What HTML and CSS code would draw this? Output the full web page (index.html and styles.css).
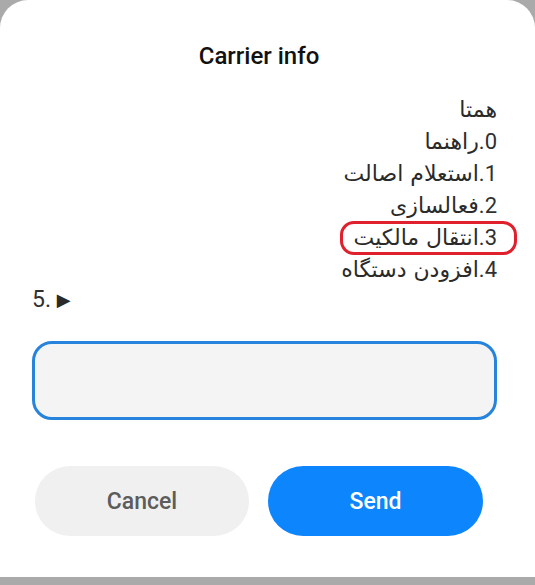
FILE: index.html
```html
<!DOCTYPE html>
<html lang="en">
<head>
<meta charset="utf-8">
<title>Carrier info</title>
<link rel="stylesheet" href="styles.css">
</head>
<body>
<div class="sheet">
  <h1 class="title">Carrier info</h1>
  <div class="menu" dir="rtl">
    <div class="line">همتا</div>
    <div class="line"><span class="num">0.</span>راهنما</div>
    <div class="line"><span class="num">1.</span>استعلام اصالت</div>
    <div class="line"><span class="num">2.</span>فعالسازی</div>
    <div class="line"><span class="mark"><span class="num">3.</span>انتقال مالکیت</span></div>
    <div class="line"><span class="num">4.</span>افزودن دستگاه</div>
  </div>
  <div class="prompt">5. <span class="arrow">&#x25B6;</span></div>
  <div class="input"></div>
  <div class="actions">
    <button class="btn cancel">Cancel</button>
    <button class="btn send">Send</button>
  </div>
</div>
</body>
</html>
```

FILE: styles.css
```css
html, body {
  margin: 0;
  padding: 0;
}
body {
  background: #aaaaaa;
  font-family: Roboto, "DejaVu Sans", sans-serif;
  width: 535px;
  height: 585px;
  overflow: hidden;
}
.sheet {
  background: #ffffff;
  height: 577px;
  border-radius: 28px 28px 0 0;
  box-sizing: border-box;
  padding-top: 41px;
}
.title {
  margin: 0;
  text-align: center;
  font-size: 24px;
  font-weight: 500;
  line-height: 30px;
  color: #111111;
  padding-right: 17px;
}
.menu {
  margin-top: 23px;
  padding-right: 38px;
  font-family: "DejaVu Sans", sans-serif;
  font-size: 22px;
  line-height: 32px;
  color: #2a2a2a;
}
.line {
  text-align: right;
  height: 32px;
}
.num {
  font-family: Roboto, sans-serif;
  font-size: 22px;
  color: #303030;
}
.mark {
  position: relative;
  display: inline-block;
}
.mark::after {
  content: "";
  position: absolute;
  left: -14px;
  right: -20px;
  top: -1px;
  bottom: -1px;
  border: 3px solid #e0202c;
  border-radius: 14px;
}
.prompt {
  padding-left: 32px;
  font-size: 23px;
  line-height: 28px;
  color: #303030;
}
.arrow {
  font-family: "DejaVu Sans", sans-serif;
  font-size: 18px;
  color: #2a2a2a;
  vertical-align: 1px;
}
.input {
  margin: 27px 38px 0 32px;
  height: 79px;
  box-sizing: border-box;
  border: 3px solid #2784dc;
  border-radius: 20px;
  background: #f4f4f4;
}
.actions {
  display: flex;
  gap: 19px;
  margin-top: 46px;
  padding-left: 35px;
}
.btn {
  width: 214px;
  height: 70px;
  border: none;
  border-radius: 35px;
  font-family: Roboto, sans-serif;
  font-size: 23px;
  font-weight: 500;
}
.cancel {
  background: #f0f0f0;
  color: #5c5c5c;
}
.send {
  background: #0d85fd;
  color: #ffffff;
  width: 215px;
}
```
